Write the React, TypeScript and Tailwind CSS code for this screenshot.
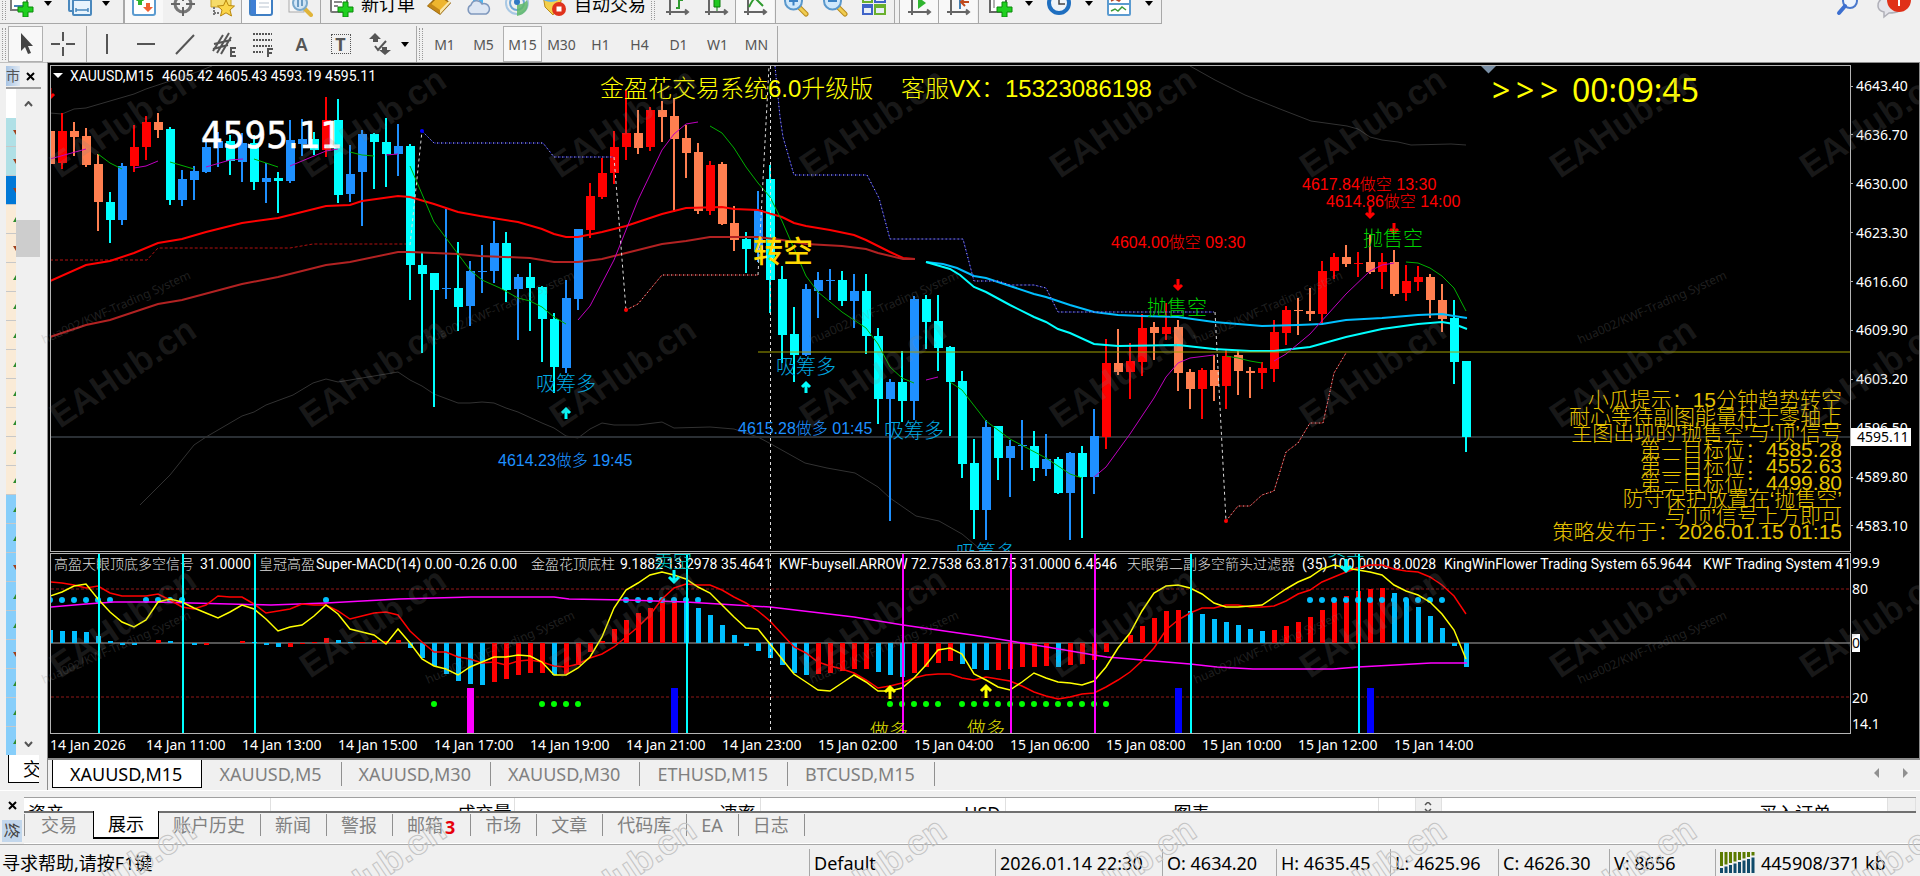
import type { ReactNode } from 'react'
import clsx from 'clsx'

const UI = "font-['Noto_Sans','Noto_Sans_CJK_SC',sans-serif]"
const LABEL = "font-['Roboto','Noto_Sans_CJK_SC',sans-serif] font-normal"
const ARIAL = "font-['Liberation_Sans','Noto_Sans_CJK_SC',sans-serif] font-light"

const CYAN = '#00ffff'
const BLUE = '#1e90ff'
const RED = '#ff0000'
const CORAL = '#ff7f50'
const SKY = '#00bfff'

// every candle sits on a 12px step
const cx = (i: number) => 50 + i * 12

type Candle = [color: string, top: number, bottom: number, high: number, low: number]

const candles: Candle[] = [
  [CORAL, 131, 164, 122, 173], [RED, 131, 163, 113, 169], [CORAL, 131, 137, 122, 156], [CORAL, 136, 165, 128, 167],
  [CORAL, 164, 202, 154, 231], [CYAN, 202, 220, 192, 243], [BLUE, 166, 220, 163, 225], [RED, 147, 166, 125, 172],
  [RED, 122, 147, 116, 160], [CORAL, 122, 130, 113, 138], [CYAN, 129, 200, 127, 205], [BLUE, 179, 200, 170, 206],
  [BLUE, 171, 180, 166, 200], [BLUE, 147, 172, 139, 173], [BLUE, 141, 148, 132, 167], [CYAN, 141, 161, 135, 175],
  [BLUE, 143, 162, 133, 182], [CYAN, 143, 182, 135, 190], [BLUE, 178, 182, 163, 203], [CYAN, 178, 181, 172, 213],
  [BLUE, 140, 181, 120, 183], [BLUE, 139, 144, 119, 156], [CYAN, 139, 150, 132, 155], [RED, 120, 150, 97, 157],
  [CYAN, 120, 195, 99, 203], [BLUE, 174, 194, 145, 202], [BLUE, 134, 172, 130, 226], [CYAN, 134, 142, 133, 189],
  [CYAN, 142, 154, 118, 187], [BLUE, 146, 154, 124, 176], [CYAN, 146, 265, 144, 300], [CYAN, 265, 274, 252, 353],
  [CYAN, 273, 290, 273, 407], [BLUE, 288, 289, 209, 299], [CYAN, 288, 307, 242, 331], [BLUE, 271, 306, 261, 326],
  [BLUE, 271, 272, 245, 293], [BLUE, 243, 271, 221, 283], [CYAN, 243, 290, 232, 302], [BLUE, 277, 289, 274, 340],
  [CYAN, 277, 288, 263, 331], [CYAN, 287, 319, 286, 362], [CYAN, 319, 367, 313, 393], [BLUE, 298, 368, 280, 373],
  [BLUE, 229, 299, 229, 310], [RED, 196, 230, 183, 238], [RED, 173, 197, 158, 199], [RED, 147, 173, 131, 184],
  [RED, 133, 147, 90, 160], [CORAL, 133, 148, 110, 154], [RED, 110, 147, 107, 151], [CORAL, 110, 117, 101, 142],
  [CORAL, 116, 139, 98, 212], [CORAL, 138, 153, 125, 178], [CORAL, 152, 211, 143, 214], [RED, 165, 211, 161, 215],
  [CORAL, 164, 224, 162, 225], [CORAL, 223, 240, 206, 251], [CYAN, 239, 249, 232, 273], [BLUE, 210, 252, 191, 262],
  [CYAN, 179, 280, 165, 313], [CYAN, 279, 335, 266, 363], [CYAN, 334, 355, 307, 382], [BLUE, 289, 355, 284, 356],
  [BLUE, 280, 291, 272, 318], [BLUE, 280, 281, 269, 300], [CYAN, 280, 301, 271, 306], [BLUE, 291, 301, 274, 328],
  [CYAN, 291, 336, 274, 354], [CYAN, 336, 399, 328, 424], [BLUE, 382, 399, 379, 521], [CYAN, 382, 401, 351, 422],
  [BLUE, 299, 401, 296, 420], [CYAN, 299, 322, 295, 349], [CYAN, 321, 348, 295, 371], [CYAN, 347, 382, 346, 436],
  [CYAN, 381, 464, 371, 478], [CYAN, 463, 510, 439, 539], [BLUE, 427, 510, 420, 540], [CYAN, 426, 458, 426, 480],
  [BLUE, 446, 458, 440, 497], [BLUE, 445, 446, 420, 470], [CYAN, 446, 468, 431, 481], [BLUE, 459, 469, 434, 476],
  [CYAN, 459, 493, 457, 494], [BLUE, 453, 493, 452, 540], [CYAN, 453, 477, 446, 538], [BLUE, 436, 477, 409, 494],
  [RED, 363, 437, 339, 449], [CORAL, 363, 372, 329, 375], [RED, 361, 372, 343, 399], [RED, 328, 362, 314, 376],
  [CORAL, 327, 333, 322, 360], [RED, 327, 334, 303, 340], [CORAL, 327, 373, 320, 391], [CORAL, 372, 389, 369, 409],
  [RED, 370, 389, 368, 419], [CORAL, 370, 386, 355, 401], [RED, 356, 386, 350, 409], [CORAL, 355, 371, 351, 395],
  [CORAL, 371, 373, 367, 398], [RED, 368, 373, 362, 389], [RED, 332, 369, 320, 382], [RED, 310, 333, 306, 345],
  [CORAL, 310, 311, 298, 335], [CORAL, 311, 314, 288, 321], [RED, 271, 314, 261, 325], [RED, 257, 271, 253, 279],
  [CORAL, 257, 264, 245, 267], [RED, 263, 264, 252, 277], [CORAL, 262, 272, 235, 274], [RED, 262, 272, 253, 289],
  [CORAL, 262, 294, 250, 296], [RED, 281, 293, 265, 301], [RED, 277, 282, 266, 291], [CORAL, 277, 300, 274, 318],
  [CORAL, 300, 319, 284, 332], [CYAN, 318, 362, 300, 384], [CYAN, 361, 437, 361, 452],
]

const bands = [
  '50,113 62,114 74,109 86,108 134,94 146,89 158,85 182,77 194,73 212,66',
  '140,505 170,475 182,460 194,445 206,437 242,416 254,412 266,405 293,395 313,383 326,379 338,382 398,372 410,380 422,386 434,394 458,403 470,403 482,402 494,403 506,408 518,412 542,423 554,428 566,436 578,438 590,429 602,423 614,425 638,425 662,422 674,428 710,427 734,429 758,437 771,444 805,463 827,468 855,473 878,487 890,498 916,516 939,521 962,534 980,549',
  '1190,66 1215,80 1245,95 1280,109 1311,121 1347,126 1358,129 1370,137 1382,140 1398,142 1411,145 1451,144 1466,145',
]

const averages = [
  { color: RED, pts: '50,281 86,265 110,261 134,253 158,243 182,239 206,232 242,223 278,218 302,212 326,206 350,205 362,201 398,196 410,197 434,204 458,212 480,216 518,222 542,229 554,234 566,237 578,237 602,232 626,226 638,222 662,214 686,208 722,207 734,209 758,210 782,217 794,223 806,226 830,230 854,235 866,240 890,252 903,258 915,259' },
  { color: '#b22222', pts: '50,337 86,325 110,320 158,304 182,300 242,284 278,277 326,265 350,262 398,252 410,252 458,254 480,256 530,258 554,262 578,262 602,259 626,253 662,244 686,241 710,237 758,237 782,240 806,244 842,246 866,249 878,253 903,259 915,259' },
  { color: SKY, pts: '926,262 943,264 957,268 974,276 986,278 998,282 1034,294 1046,297 1070,305 1094,312 1118,315 1142,316 1178,317 1214,322 1238,324 1262,326 1298,325 1322,324 1346,320 1382,318 1418,315 1442,314 1454,316 1467,318' },
  { color: CYAN, pts: '926,262 950,269 960,275 974,287 986,292 1010,305 1034,317 1046,322 1058,329 1070,333 1094,344 1118,346 1178,345 1214,349 1250,351 1274,351 1310,347 1346,337 1382,329 1418,324 1430,323 1442,322 1454,324 1467,329' },
]

const risingLines = [
  '50,159 86,149', '134,168 146,166 158,161', '206,167 230,160 243,159', '290,166 326,151 338,149', '386,155 398,154',
  '578,320 590,306 614,260 638,200 662,150 674,134 686,124 698,122', '926,380 938,377',
  '1094,477 1106,467 1130,434 1154,398 1166,377 1178,363 1190,358 1214,355',
  '1274,361 1286,354 1310,334 1346,294 1370,271 1382,265 1394,263',
]

const fallingLines = [
  '98,154 110,163 122,169', '170,162 194,169', '254,159 278,167', '350,152 362,155 374,156',
  '410,166 434,222 458,254 470,270 482,280 500,288 518,298 530,301 542,307 554,317 566,324',
  '710,126 722,133 734,148 746,167 758,183 770,197 782,221 806,276 818,292 842,312 866,328 878,344 890,367 902,378 914,383',
  '950,382 962,390 986,421 1010,439 1046,458 1070,474 1082,478', '1226,356 1238,358 1250,361 1262,363',
  '1406,262 1418,263 1430,268 1442,276 1454,288 1466,311',
]

const stops = [
  { color: '#2020ff', pts: '422,131 434,143 543,143 554,157 614,157' },
  { color: '#2020ff', pts: '775,66 780,117 783,137 794,175 867,175 879,198 890,239 963,239 974,281 998,281 1010,285 1034,285 1046,288 1058,312 1214,312' },
  { color: '#ff2020', pts: '626,310 638,304 662,275 758,275' },
  { color: '#ff2020', pts: '1226,521 1238,506 1250,506 1262,495 1274,491 1286,452 1298,443 1310,423 1323,423 1334,373 1346,353' },
]

const bars = [
  { color: SKY, from: 0, ys: [630, 631, 631, 632, 636, 641, 645, 645] },
  { color: RED, from: 9, ys: [640] },
  { color: SKY, from: 10, ys: [641] },
  { color: SKY, from: 12, ys: [645] },
  { color: RED, from: 13, ys: [645] },
  { color: RED, from: 16, ys: [641] },
  { color: SKY, from: 17, ys: [642, 645, 647] },
  { color: RED, from: 20, ys: [647, 644, 642, 638] },
  { color: SKY, from: 24, ys: [640, 642] },
  { color: RED, from: 26, ys: [642, 640, 641, 640] },
  { color: SKY, from: 30, ys: [648, 658, 666, 674, 681, 684, 685] },
  { color: RED, from: 37, ys: [682, 679, 675, 673, 673] },
  { color: SKY, from: 42, ys: [675] },
  { color: RED, from: 43, ys: [674, 665, 652, 641, 629, 620, 613, 608, 602, 600] },
  { color: SKY, from: 53, ys: [602, 608, 615, 625, 635, 646, 651, 658, 665, 673, 675] },
  { color: RED, from: 64, ys: [674, 673, 671, 669, 669] },
  { color: SKY, from: 69, ys: [672, 675, 677] },
  { color: RED, from: 72, ys: [673, 667, 663, 661] },
  { color: SKY, from: 76, ys: [664, 669, 670] },
  { color: RED, from: 79, ys: [670, 669, 667, 667, 666] },
  { color: SKY, from: 84, ys: [667] },
  { color: RED, from: 85, ys: [665, 664, 660, 652] },
  { color: RED, from: 90, ys: [635, 626, 618, 611, 610] },
  { color: SKY, from: 95, ys: [611, 614, 619, 622, 625, 629, 631] },
  { color: RED, from: 102, ys: [630, 626, 622, 617, 610, 602, 596, 591, 589, 588] },
  { color: SKY, from: 112, ys: [593, 599, 607, 616, 628, 646, 667] },
]

const yellowLine = [
  596, 592, 586, 584, 599, 612, 622, 627, 620, 602, 599, 602, 608, 613, 618, 612, 605, 609, 619, 631, 627, 625, 616, 605,
  614, 629, 632, 635, 644, 629, 643, 659, 666, 669, 675, 667, 662, 657, 657, 655, 656, 662, 675, 675, 668, 657, 637, 608,
  590, 583, 575, 572, 575, 579, 587, 593, 605, 617, 628, 629, 644, 659, 674, 682, 690, 691, 683, 675, 682, 691, 691, 688,
  678, 665, 650, 648, 654, 674, 680, 687, 690, 682, 673, 678, 682, 683, 685, 681, 667, 648, 633, 611, 593, 586, 585, 588,
  594, 603, 607, 607, 606, 605, 597, 589, 582, 577, 569, 565, 568, 570, 572, 575, 585, 591, 595, 602, 614, 630, 659,
]

const redLine = [
  582, 583, 585, 588, 586, 593, 596, 596, 596, 594, 600, 607, 609, 605, 596, 597, 597, 604, 613, 611, 609, 604, 605, 605,
  611, 619, 616, 613, 612, 615, 631, 642, 652, 652, 657, 659, 663, 662, 665, 661, 660, 662, 666, 667, 664, 658, 654, 647,
  637, 627, 615, 599, 588, 584, 585, 585, 590, 597, 603, 611, 621, 634, 647, 653, 662, 666, 669, 673, 680, 688, 686, 683,
  678, 675, 674, 674, 678, 680, 677, 679, 681, 686, 692, 696, 699, 697, 694, 693, 687, 680, 672, 661, 648, 630, 620, 613,
  608, 608, 605, 605, 607, 607, 606, 601, 594, 590, 582, 577, 572, 568, 565, 565, 569, 571, 572, 577, 585, 596, 614,
]

const magentaLine =
  '50,607 86,604 114,602 154,602 229,604 271,605 326,603 399,599 471,597 554,597 569,599 626,600 686,602 770,607 854,617 903,625 986,637 1047,647 1094,655 1107,657 1142,660 1190,664 1217,667 1253,669 1333,669 1358,667 1395,665 1431,663 1467,663'

const toPoints = (ys: number[]) => ys.map((y, i) => `${cx(i)},${y}`).join(' ')
const range = (a: number, b: number) => Array.from({ length: b - a + 1 }, (_, k) => a + k)

const blueDots = [...range(0, 5), ...range(8, 11), 23, ...range(48, 54), ...range(105, 116)]
const greenDots = [32, ...range(41, 44), ...range(70, 74), ...range(76, 88)]

const notes = [
  '小瓜提示：15分钟趋势转空',
  '耐心等待副图能量柱于零轴上',
  '主图出现的‘抛售空’与‘顶’信号',
  '第一目标位：4585.28',
  '第二目标位：4552.63',
  '第三目标位：4499.80',
  '防守保护放置在‘抛售空’',
  '与‘顶’信号上方即可',
  '策略发布于：2026.01.15 01:15',
]

const indicatorNames: [number, string][] = [
  [54, '高盈天眼顶底多空信号'], [259, '皇冠高盈'], [531, '金盈花顶底柱'], [1127, '天眼第二副多空箭头过滤器'],
]

const indicatorValues: [number, string][] = [
  [200, '31.0000'], [316, 'Super-MACD(14) 0.00 -0.26 0.00'], [620, '9.1882 13.2978 35.4641'],
  [779, 'KWF-buysell.ARROW 72.7538 63.8175 31.0000 6.4646'], [1302, '(35) 100.0000 8.0028'],
  [1444, 'KingWinFlower Trading System 65.9644'], [1703, 'KWF Trading System 41.0000'],
]

const prices = ['4643.40', '4636.70', '4630.00', '4623.30', '4616.60', '4609.90', '4603.20', '4596.50', '4589.80', '4583.10']

const times = [
  '14 Jan 2026', '14 Jan 11:00', '14 Jan 13:00', '14 Jan 15:00', '14 Jan 17:00', '14 Jan 19:00', '14 Jan 21:00', '14 Jan 23:00',
  '15 Jan 02:00', '15 Jan 04:00', '15 Jan 06:00', '15 Jan 08:00', '15 Jan 10:00', '15 Jan 12:00', '15 Jan 14:00',
]

/* ---------- toolbar icons ---------- */

const Svg = ({ children }: { children: ReactNode }) => (
  <svg width="26" height="26" viewBox="0 0 26 26" fill="none" className="shrink-0">{children}</svg>
)

const Plus = () => <path d="M14 11h5v5h5v5h-5v5h-5v-5H9v-5h5z" fill="#1fd01f" stroke="#0b8a0b" strokeWidth="1" />

const Lens = ({ sign }: { sign: ReactNode }) => (
  <Svg>
    <path d="M16 16l7 7" stroke="#b98a1c" strokeWidth="5" strokeLinecap="round" />
    <path d="M16 16l7 7" stroke="#f0cc50" strokeWidth="3" strokeLinecap="round" />
    <circle cx="10.500" cy="10" r="8.500" fill="#cfe8fb" stroke="#5a98cc" strokeWidth="2" />
    {sign}
  </Svg>
)

const Axes = ({ children }: { children?: ReactNode }) => (
  <Svg>
    <path d="M6 2v22M2 21h22M21 18.500l3 2.500-3 2.500" stroke="#666" strokeWidth="2" />
    {children}
  </Svg>
)

const icons = {
  newChart: (
    <Svg>
      <rect x="2" y="2" width="16" height="17" fill="#fff" stroke="#7a7a7a" strokeWidth="2" />
      <path d="M5 15h10" stroke="#4682b4" strokeWidth="2" />
      <Plus />
    </Svg>
  ),
  profiles: (
    <Svg>
      <rect x="2" y="3" width="17" height="17" rx="1" fill="#dceefb" stroke="#4a88bd" strokeWidth="2" />
      <rect x="6" y="9" width="18" height="15" rx="1" fill="#e8f4fd" stroke="#4a88bd" strokeWidth="2" />
      <path d="M9 19h12M9 17v4M21 17v4" stroke="#4a88bd" strokeWidth="1.500" />
    </Svg>
  ),
  market: (
    <Svg>
      <rect x="2" y="1" width="22" height="23" rx="2" fill="#fff" stroke="#5b9bd0" strokeWidth="2" />
      <path d="M9 5l4 5h-2v4H7v-4H5z" fill="#2fb52f" />
      <path d="M17 21l-5-5h3v-4h4v4h3z" fill="#f06030" />
    </Svg>
  ),
  target: (
    <Svg>
      <circle cx="13" cy="13" r="8" stroke="#777" strokeWidth="3" />
      <path d="M13 1v9M13 16v9M1 13h9M16 13h9" stroke="#666" strokeWidth="2" />
    </Svg>
  ),
  folder: (
    <Svg>
      <path d="M2 5h8l2 3h10v8H2z" fill="#f6dc6a" stroke="#c9a227" />
      <path d="M5 16v9M5 22h6" stroke="#777" strokeWidth="2" strokeDasharray="2 1" />
      <path d="M17 9l2.500 5.500 6 .5-4.500 4 1.500 6-5.500-3.200L11.500 25l1.500-6-4.500-4 6-.5z" fill="#fbd54a" stroke="#b8860b" />
    </Svg>
  ),
  list: (
    <Svg>
      <rect x="2" y="2" width="22" height="22" rx="2" fill="#fff" stroke="#3f7fc4" strokeWidth="2" />
      <path d="M3 3h5v20H3z" fill="#3f7fd4" />
      <path d="M11 8h10M11 12h10M11 16h10" stroke="#b9c4d0" />
    </Svg>
  ),
  tester: (
    <Svg>
      <rect x="2" y="1" width="15" height="20" fill="#f6f6f6" stroke="#aaa" />
      <path d="M17 17l7 7" stroke="#e0b43a" strokeWidth="4" strokeLinecap="round" />
      <circle cx="13" cy="12" r="7" fill="#cfe6f8" fillOpacity=".9" stroke="#7aa9cc" strokeWidth="2" />
      <path d="M11 8v8M15 9v6" stroke="#6b9cc4" strokeWidth="2" />
    </Svg>
  ),
  order: (
    <Svg>
      <rect x="2" y="1" width="16" height="20" rx="1" fill="#fff" stroke="#777" strokeWidth="2" />
      <path d="M5 7h9M5 11h8M5 15h4" stroke="#888" strokeWidth="2" />
      <Plus />
    </Svg>
  ),
  book: (
    <Svg>
      <path d="M2 15L13 4l11 8-10 11z" fill="#eeb52e" stroke="#9a6a10" strokeWidth="1.500" />
      <path d="M2 15l12 8v-4L4 12z" fill="#c48718" />
      <path d="M14 23l10-11v-3L14 19z" fill="#fbe7a8" />
    </Svg>
  ),
  cloud: (
    <Svg>
      <path d="M8 2h10v11H8z" fill="#4fb6f0" />
      <path d="M13 3v9" stroke="#fff" strokeWidth="2" />
      <path d="M6 23a5 5 0 010-9 6 6 0 0111-1 5 5 0 014 10z" fill="#dde6f3" stroke="#7f98bd" strokeWidth="1.500" />
    </Svg>
  ),
  signal: (
    <Svg>
      <circle cx="13" cy="12" r="11" stroke="#a8c8e4" strokeWidth="2" />
      <circle cx="13" cy="12" r="7" stroke="#6fa8d8" strokeWidth="2" />
      <path d="M13 25V13a10 10 0 0010-4c3 8-2 15-10 16z" fill="#5fb96a" fillOpacity=".85" />
      <circle cx="13" cy="11" r="3" fill="#2f79c4" />
    </Svg>
  ),
  robot: (
    <Svg>
      <path d="M3 4h20l-3 9-7 11-8-8z" fill="#f4cf4a" stroke="#b98a1c" />
      <ellipse cx="11" cy="6" rx="9" ry="5" fill="#6bb4e8" />
      <circle cx="19" cy="18" r="7" fill="#e0321c" />
      <path d="M16.500 15.500h5v5h-5z" fill="#fff" />
    </Svg>
  ),
  barChart: <Axes><path d="M15 2v16M15 9h4M12 17h3" stroke="#2f9a2f" strokeWidth="2" /></Axes>,
  candleChart: <Axes><path d="M14 2v18" stroke="#0a7a0a" /><path d="M11 2h6v14h-6z" fill="#1fc81f" stroke="#0a7a0a" /></Axes>,
  lineChart: <Axes><path d="M7 16c2-4 5-10 7-8s4 4 7 7" stroke="#2f9a2f" strokeWidth="2" /></Axes>,
  zoomIn: <Lens sign={<path d="M6 10h9M10.500 5.500v9" stroke="#3b82c4" strokeWidth="2" />} />,
  zoomOut: <Lens sign={<path d="M6 10h9" stroke="#3b82c4" strokeWidth="2" />} />,
  tile: (
    <Svg>
      <path d="M1 1h11v11H1zM13 13h12v11H13z" fill="#6ab02e" />
      <path d="M13 1h12v11H13zM1 13h11v11H1z" fill="#3f63c8" />
      <path d="M3 5h7v5H3zM15 5h8v5h-8zM3 17h7v5H3zM15 17h8v5h-8z" fill="#e8eef8" />
    </Svg>
  ),
  autoScroll: <Axes><path d="M12 6l8 6-8 6z" fill="#2fb52f" /></Axes>,
  shift: <Axes><path d="M15 4v14" stroke="#4682b4" strokeWidth="2" /><path d="M24 11h-7M20 7l-4 4 4 4" stroke="#c04a1c" strokeWidth="2" /></Axes>,
  indicators: (
    <Svg>
      <rect x="2" y="1" width="16" height="20" fill="#fff" stroke="#666" strokeWidth="2" />
      <path d="M6 5v12" stroke="#666" />
      <Plus />
    </Svg>
  ),
  clock: (
    <Svg>
      <circle cx="13" cy="12" r="10" fill="#eef3f8" stroke="#1f6fc0" strokeWidth="4" />
      <path d="M13 5v8h6" stroke="#444" strokeWidth="1.500" />
    </Svg>
  ),
  template: (
    <Svg>
      <rect x="2" y="2" width="22" height="22" rx="1" fill="#fff" stroke="#5b9bd0" strokeWidth="2" />
      <path d="M3 13h20" stroke="#5b9bd0" strokeWidth="2" />
      <path d="M5 10l4-2 4 2 4-4 4 1" stroke="#b5482a" strokeWidth="1.500" />
      <path d="M5 20l4-2 3 2 4-4 4 3" stroke="#3a9a3a" strokeWidth="1.500" />
    </Svg>
  ),
}

const Tool = ({ icon, width = 'w-[39px]', pressed, label }: { icon: ReactNode; width?: string; pressed?: boolean; label: string }) => (
  <button
    aria-label={label}
    className={clsx('flex h-full shrink-0 items-center justify-center', width, pressed && 'border-l border-[#a8a8a8] bg-[#f8f8f8]')}
  >
    {icon}
  </button>
)

const Caret = ({ width, label }: { width: string; label: string }) => (
  <button aria-label={label} className={clsx('flex h-full shrink-0 items-center justify-center', width)}>
    <svg width="8" height="5" viewBox="0 0 8 5"><path d="M0 0h8L4 5z" fill="#000" /></svg>
  </button>
)

const Grip = () => <span className="mx-0.5 h-8 w-1 shrink-0 border-x border-dotted border-[#999]" />
const Sep = () => <span className="h-full w-0.5 shrink-0 border-r border-[#a8a8a8]" />

const TopToolbar = () => (
  <div className="flex h-6 items-end justify-between overflow-hidden">
    <div className="flex h-10 shrink-0 items-center border-r border-b border-[#a8a8a8] pr-1.5">
      <Grip />
      <Tool icon={icons.newChart} width="w-7" label="New chart" />
      <Caret width="w-6" label="Chart list" />
      <Tool icon={icons.profiles} width="w-10" label="Profiles" />
      <Caret width="w-3" label="Profile list" />
      <span className="w-2.5" />
      <Sep />
      <Tool icon={icons.market} pressed label="Market watch" />
      <Tool icon={icons.target} label="Data window" />
      <Tool icon={icons.folder} label="Navigator" />
      <Tool icon={icons.list} pressed label="Terminal" />
      <Tool icon={icons.tester} label="Tester" />
      <Sep />
      <button className="flex h-full w-[98px] shrink-0 items-center gap-1.5 pl-2 text-lg whitespace-nowrap text-black">
        {icons.order}
        新订单
      </button>
      <Tool icon={icons.book} label="Editor" />
      <Tool icon={icons.cloud} label="Cloud" />
      <Tool icon={icons.signal} label="Signals" />
      <button className="flex h-full w-[113px] shrink-0 items-center gap-2 pl-1 text-lg whitespace-nowrap text-black">
        {icons.robot}
        自动交易
      </button>
      <Grip />
      <Tool icon={icons.barChart} label="Bars" />
      <Tool icon={icons.candleChart} label="Candles" />
      <Tool icon={icons.lineChart} pressed label="Line" />
      <Sep />
      <Tool icon={icons.zoomIn} label="Zoom in" />
      <Tool icon={icons.zoomOut} label="Zoom out" />
      <Tool icon={icons.tile} label="Tile windows" />
      <Sep />
      <span className="w-1" />
      <Tool icon={icons.autoScroll} pressed label="Auto scroll" />
      <Tool icon={icons.shift} pressed label="Chart shift" />
      <Sep />
      <Tool icon={icons.indicators} width="w-11" label="Indicators" />
      <Caret width="w-3" label="Indicator list" />
      <Tool icon={icons.clock} width="w-12" label="Periods" />
      <Caret width="w-3" label="Period list" />
      <Tool icon={icons.template} width="w-12" label="Templates" />
      <Caret width="w-3" label="Template list" />
    </div>
    <div className="flex h-10 items-center gap-4 pr-2">
      <button aria-label="Search">
        <svg width="24" height="26" viewBox="0 0 24 26" fill="none">
          <circle cx="14" cy="10" r="7" fill="#eef4fc" stroke="#4a78cc" strokeWidth="2" />
          <path d="M9 15l-6 7" stroke="#3c6fd0" strokeWidth="4" strokeLinecap="round" />
        </svg>
      </button>
      <button aria-label="Messages">
        <svg width="36" height="34" viewBox="0 0 36 34" fill="none">
          <path d="M2 19c0-7 6-9 12-9s12 3 12 9-6 7-13 7l-5 4v-5c-4-1-6-3-6-6z" fill="#e4e4ea" stroke="#b0b0b8" strokeWidth="1.500" />
          <circle cx="23" cy="13" r="12" fill="#e03018" />
          <path d="M23 6v13" stroke="#fff" strokeWidth="2" />
        </svg>
      </button>
    </div>
  </div>
)

const drawIcons: { label: string; art: ReactNode }[] = [
  { label: 'Vertical line', art: <path d="M13 3v20" /> },
  { label: 'Horizontal line', art: <path d="M4 13h18" /> },
  { label: 'Trend line', art: <path d="M4 23L22 4" /> },
  {
    label: 'Channel',
    art: <><path d="M2 20L12 4M6 22L18 2M10 23L20 6M3 13l17-4M2 18l15-4" /><path d="M25 17h-5v8h5M20 21h4" /></>,
  },
  {
    label: 'Fibonacci',
    art: <><path d="M3 3h19M3 9h19M3 15h19M3 21h10" strokeDasharray="2 1" /><path d="M18 26v-8h5M18 22h4" /></>,
  },
]

const timeframes = ['M1', 'M5', 'M15', 'M30', 'H1', 'H4', 'D1', 'W1', 'MN']

const DrawToolbar = () => (
  <div className="flex h-[38px] items-center pt-0.5 text-[#555]">
    <Grip />
    <button aria-label="Cursor" className="flex h-full w-[35px] items-center justify-center border border-[#b0b0b0] bg-[#f8f8f8]">
      <svg width="14" height="24" viewBox="0 0 14 24"><path d="M2 1v18l4-4 3 7 3-1-3-7h5z" fill="#444" /></svg>
    </button>
    <Tool label="Crosshair" icon={<Svg><path d="M13 1v9M13 16v9M1 13h9M16 13h9" stroke="#555" strokeWidth="2" /></Svg>} />
    <span className="w-[3px]" />
    <Sep />
    {drawIcons.map((d) => (
      <Tool key={d.label} label={d.label} icon={<Svg><g stroke="#555" strokeWidth="2">{d.art}</g></Svg>} />
    ))}
    <button className="w-[39px] text-lg font-semibold">A</button>
    <button className="flex w-[39px] justify-center">
      <span className="h-5 w-5 border border-dotted border-[#555] text-center text-lg leading-[18px] font-bold">T</span>
    </button>
    <Tool
      label="Arrows"
      icon={<Svg><path d="M8 2l6 6h-3v3H6V8H2zM18 24l-6-5h3v-3h5v3h4z" fill="#555" /><path d="M8 15l3 4 8-9" stroke="#555" strokeWidth="2" /></Svg>}
    />
    <Caret width="w-3" label="Arrow list" />
    <span className="w-1" />
    <Sep />
    <Grip />
    {timeframes.map((t) => (
      <button
        key={t}
        className={clsx('h-full w-[39px] text-[14px]', t === 'M15' && 'border border-[#b0b0b0] bg-[#f8f8f8]')}
      >
        {t}
      </button>
    ))}
    <Sep />
  </div>
)

/* ---------- market watch strip ---------- */

const rowColors = [
  ...Array(2).fill('bg-[#b0e0e6]'), 'bg-[#0078d7]', ...Array(10).fill('bg-[#faebd7]'), ...Array(9).fill('bg-[#87cefa]'),
] as string[]
const downRows = [0, 1, 2, 4, 15, 18]

const SidePanel = () => (
  <aside className="flex w-[47px] shrink-0 flex-col border-t border-[#c0c0c0] pl-1.5">
    <div className="flex h-6 items-center gap-1.5 pt-0.5">
      <span className="h-5 w-3.5 overflow-hidden bg-gradient-to-r from-[#a8c4e4] to-[#dfe8f2] text-sm leading-5 text-[#555]">市</span>
      <button aria-label="Close panel">
        <svg width="9" height="9" viewBox="0 0 9 9"><path d="M1 1l7 7M8 1L1 8" stroke="#000" strokeWidth="2" /></svg>
      </button>
    </div>
    <div className="flex h-[668px] w-[35px] border-t-2 border-[#a0a0a0]">
      <div className="w-2.5 overflow-hidden">
        <div className="h-[29px] bg-white" />
        {rowColors.map((c, i) => (
          <div key={i} className={clsx('flex h-[29px] items-center justify-end border-b border-[#c8c8c8]', c)}>
            <svg width="3" height="5" viewBox="0 0 3 5">
              <path d={downRows.includes(i) ? 'M0 0h3v5z' : 'M3 0v5H0z'} fill={downRows.includes(i) ? '#a0401c' : '#2e8b2e'} />
            </svg>
          </div>
        ))}
      </div>
      <div className="flex w-6 flex-col items-center justify-between pt-3 pb-2">
        <svg width="9" height="6" viewBox="0 0 9 6" fill="none"><path d="M1 5l3.500-4L8 5" stroke="#555" strokeWidth="2" /></svg>
        <span className="mb-[372px] h-[37px] w-6 bg-[#cdcdcd]" />
        <svg width="9" height="6" viewBox="0 0 9 6" fill="none"><path d="M1 1l3.500 4L8 1" stroke="#555" strokeWidth="2" /></svg>
      </div>
    </div>
    <button className="ml-0.5 h-7 w-[31px] overflow-hidden border-b border-l border-black bg-white pl-3.5 text-left text-lg leading-6 whitespace-nowrap">交易品种</button>
  </aside>
)

/* ---------- chart ---------- */

const Arrow = ({ x, y, color, down, size = 4 }: { x: number; y: number; color: string; down?: boolean; size?: number }) => {
  const s = down ? -1 : 1
  return (
    <path
      d={`M${x} ${y + s * (size + 2)}V${y - s * 3}M${x - size} ${y}L${x} ${y - s * size}L${x + size} ${y}`}
      stroke={color}
      strokeWidth="3"
      fill="none"
    />
  )
}

const Dotted = ({ pts, color }: { pts: string; color: string }) => (
  <>
    <polyline points={pts} stroke={color} strokeOpacity=".7" strokeDasharray="3 1" />
    <polyline points={pts} stroke="#ccc" strokeDasharray="1 3" />
  </>
)

const MainPane = () => (
  <div className="relative h-[487px] overflow-hidden border border-[#b4b4b4]">
    <svg className="absolute inset-0 h-full w-full" fill="none">
      <line x1="0" x2="100%" y1="371" y2="371" stroke="#555f69" />
      <g transform="translate(-51 -66)">
        {bands.map((b) => <polyline key={b} points={b} stroke="#323232" />)}
        <polyline points="50,260 147,260 158,248 290,248 313,244 410,244" stroke="#b01010" strokeDasharray="3 2" />
        {candles.map(([color, top, bottom, high, low], i) => (
          <g key={i} fill={color}>
            <rect x={cx(i) - 1} y={high} width="2" height={low - high} />
            <rect x={cx(i) - 4} y={top} width="9" height={bottom - top} />
          </g>
        ))}
        {averages.map((a) => <polyline key={a.color} points={a.pts} stroke={a.color} strokeWidth="2" />)}
        {risingLines.map((l) => <polyline key={l} points={l} stroke="#c000c0" />)}
        {fallingLines.map((l) => <polyline key={l} points={l} stroke="#00b000" />)}
        {stops.map((s) => <Dotted key={s.pts} {...s} />)}
        <g stroke="#ddd" strokeDasharray="3 3">
          <path d="M410 245L422 131M614 157L626 310M758 275L769 66M1215 312L1226 521" />
          <path d="M770.500 66V552" />
        </g>
        <circle cx="422" cy="131" r="2" fill="#00f" />
        <circle cx="626" cy="310" r="2" fill={RED} />
        <circle cx="1226" cy="521" r="2" fill={RED} />
        <Arrow x={566} y={413} color={CYAN} />
        <Arrow x={806} y={387} color={CYAN} />
        <Arrow x={1178} y={285} color={RED} down />
        <Arrow x={1370} y={213} color={RED} down />
        <Arrow x={1394} y={229} color={RED} down />
        <Arrow x={50} y={94} color={RED} down />
        <path d="M1481 66h15l-7.500 7.500z" fill="#7a8fa5" />
        <path d="M53 73h10l-5 5z" fill="#fff" />
      </g>
      <line x1="707" x2="100%" y1="286" y2="286" stroke="#a0a000" />
      <g transform="translate(-51 -66)" className={ARIAL}>
        <g fill="#fff" className={`text-[14px] ${LABEL}`}>
          <text x="70" y="81">XAUUSD,M15</text>
          <text x="162" y="81">4605.42 4605.43 4593.19 4595.11</text>
        </g>
        <text x="201" y="148" fill="#fff" stroke="#fff" strokeWidth=".6" className="font-['DejaVu_Sans_Condensed','DejaVu_Sans',sans-serif] text-[38px] font-normal">4595.11</text>
        <g fill="#ffff00" className="text-[24px]">
          <text x="600" y="97">金盈花交易系统6.0升级版</text>
          <text x="901" y="97">客服VX：15323086198</text>
        </g>
        <g fill="#ffff00" className="font-['Noto_Sans',sans-serif] text-[32px] font-normal">
          <text x="1492" y="102">&gt;</text>
          <text x="1516" y="102">&gt;</text>
          <text x="1540" y="102">&gt;</text>
          <text x="1572" y="102">00:09:45</text>
        </g>
        <text x="753" y="262" fill="#ffd700" className="text-[30px] font-medium">转空</text>
        <g fill="#00a8e0" className="text-[20px]">
          <text x="536" y="391">吸筹多</text>
          <text x="776" y="374">吸筹多</text>
          <text x="884" y="438">吸筹多</text>
          <text x="956" y="560">吸筹多</text>
        </g>
        <g fill="#00d000" className="text-[20px]">
          <text x="1147" y="315">抛售空</text>
          <text x="1363" y="246">抛售空</text>
        </g>
        <g fill={BLUE} className="text-[16px]">
          <text x="498" y="466">4614.23做多 19:45</text>
          <text x="738" y="434">4615.28做多 01:45</text>
        </g>
        <g fill={RED} className="text-[16px]">
          <text x="1302" y="190">4617.84做空 13:30</text>
          <text x="1326" y="207">4614.86做空 14:00</text>
          <text x="1111" y="248">4604.00做空 09:30</text>
        </g>
      </g>
    </svg>
    <svg className={`absolute inset-0 h-full w-full text-[21px] ${ARIAL}`} fill="#e6c200" textAnchor="end">
      <g transform="translate(-8 0)">
        {notes.map((n, i) => <text key={n} x="100%" y={341 + Math.round(i * 16.5)}>{n}</text>)}
      </g>
    </svg>
  </div>
)

const SubPane = () => (
  <div className="relative mt-px h-[181px] overflow-hidden border border-[#b4b4b4]">
    <svg className="absolute inset-0 h-full w-full" fill="none">
      <line x1="0" x2="100%" y1="35" y2="35" stroke="#901818" strokeDasharray="3 2" />
      <line x1="0" x2="100%" y1="143" y2="143" stroke="#901818" strokeDasharray="3 2" />
      <line x1="0" x2="100%" y1="89" y2="89" stroke="#aaa" />
      <g transform="translate(-51 -554)">
        {bars.map(({ color, from, ys }) =>
          ys.map((y, k) => (
            <rect key={from + k} x={cx(from + k) - 2} y={Math.min(y, 643)} width="5" height={Math.abs(643 - y)} fill={color} />
          )),
        )}
        <g className={`text-[14px] ${ARIAL}`} fill="#ddd">
          {indicatorNames.map(([x, t]) => <text key={x} x={x} y="569">{t}</text>)}
        </g>
        <g className={`text-[14px] ${LABEL}`} fill="#fff">
          {indicatorValues.map(([x, t]) => <text key={x} x={x} y="569">{t}</text>)}
        </g>
        {blueDots.map((i) => <circle key={i} cx={cx(i)} cy="600" r="3" fill={SKY} />)}
        {greenDots.map((i) => <circle key={i} cx={cx(i)} cy="704" r="3" fill="#00ff00" />)}
        <rect x="467" y="688" width="7" height="46" fill="#ff00ff" />
        {[52, 94, 110].map((i) => <rect key={i} x={cx(i) - 3} y="688" width="7" height="46" fill="#0000ff" />)}
        <polyline points={magentaLine} stroke="#ff00ff" strokeWidth="1.500" />
        <polyline points={toPoints(redLine)} stroke={RED} strokeWidth="1.500" />
        <polyline points={toPoints(yellowLine)} stroke="#ffff00" strokeWidth="1.500" />
        <path d="M99 553V733M183 553V733M255 553V733M687 553V733M1191 553V733M1359 553V733" stroke={CYAN} strokeWidth="2" />
        <path d="M903 553V733M1011 553V733M1095 553V733" stroke="#ff00ff" strokeWidth="2" />
        <path d="M770.500 553V733" stroke="#ddd" strokeDasharray="3 3" />
        <Arrow x={674} y={577} size={5} color={CYAN} down />
        <Arrow x={1346} y={566} size={5} color={CYAN} down />
        <Arrow x={890} y={692} size={5} color="#ffff00" />
        <Arrow x={986} y={691} size={5} color="#ffff00" />
        <g className={`text-[19px] ${ARIAL}`}>
          <text x="654" y="568" fill="#00c8c8">卖空</text>
          <text x="1327" y="556" fill="#00c8c8">卖空</text>
          <text x="870" y="738" fill="#e0e000">做多</text>
          <text x="967" y="736" fill="#e0e000">做多</text>
        </g>
      </g>
    </svg>
  </div>
)

const Chart = () => (
  <main className="flex min-w-0 flex-1 self-start border border-[#8c8c8c] bg-black pt-0.5 pl-0.5 text-[14px] text-white">
    <div className="min-w-0 flex-1">
      <MainPane />
      <SubPane />
      <div className="flex h-6 overflow-hidden">
        {times.map((t) => (
          <span key={t} className="w-24 shrink-0 leading-[22px] whitespace-nowrap">{t}</span>
        ))}
      </div>
    </div>
    <div className="w-[68px] shrink-0">
      <div className="relative flex h-[488px] flex-col justify-between pt-[11px] pb-[17px]">
        {prices.map((p) => (
          <span key={p} className="flex items-center gap-[3px] leading-5">
            <i className="h-px w-0.5 bg-[#b4b4b4]" />
            {p}
          </span>
        ))}
        <span className="absolute top-[363px] left-0 w-[60px] bg-white pl-1.5 leading-[18px] text-black">4595.11</span>
      </div>
      <div className="flex h-[180px] flex-col items-start pl-px leading-5">
        <span>99.9</span>
        <span className="mt-1.5">80</span>
        <span className="mt-[35px] bg-white leading-[18px] text-black">0</span>
        <span className="mt-9">20</span>
        <span className="mt-1.5">14.1</span>
      </div>
    </div>
  </main>
)

const chartTabs = ['XAUUSD,M15', 'XAUUSD,M5', 'XAUUSD,M30', 'XAUUSD,M30', 'ETHUSD,M15', 'BTCUSD,M15']

const ChartTabs = () => (
  <nav className="ml-[47px] flex h-[31px] items-start justify-between border-t border-l border-[#8c8c8c] pl-1 text-lg text-[#808080]">
    <div className="flex">
      {chartTabs.map((t, i) => (
        <button
          key={i}
          className={clsx('pr-[19px] pl-[17px] leading-6', i === 0 ? 'h-7 border border-t-0 border-black bg-white text-black' : 'mt-0.5 h-6 border-r border-[#909090]')}
        >
          {t}
        </button>
      ))}
    </div>
    <div className="flex gap-6 pt-2 pr-3">
      <button aria-label="Previous tab"><svg width="5" height="10" viewBox="0 0 5 10"><path d="M5 0v10L0 5z" fill="#909090" /></svg></button>
      <button aria-label="Next tab"><svg width="5" height="10" viewBox="0 0 5 10"><path d="M0 0v10l5-5z" fill="#909090" /></svg></button>
    </div>
  </nav>
)

const terminalTabs = ['交易', '展示', '账户历史', '新闻', '警报', '邮箱', '市场', '文章', '代码库', 'EA', '日志']

const Terminal = () => (
  <section className="flex border-t border-white pt-1.5">
    <div className="flex w-6 shrink-0 flex-col items-center gap-2.5 pt-1">
      <button aria-label="Close terminal">
        <svg width="9" height="9" viewBox="0 0 9 9"><path d="M1 1l7 7M8 1L1 8" stroke="#000" strokeWidth="2" /></svg>
      </button>
      <span className="h-[22px] w-5 overflow-hidden bg-[#c3d7ec] text-center text-base leading-5 text-[#444] [writing-mode:sideways-rl]">终</span>
    </div>
    <div className="min-w-0 flex-1 pr-1">
      <div className="h-3.5 overflow-hidden border-t border-[#a0a0a0]">
        <table className="w-full table-fixed text-lg leading-[18px] text-black">
          <thead>
            <tr className="bg-white *:border-r *:border-[#e0e0e0] *:pt-1.5 *:font-normal">
              <th className="w-[246px] pl-1 text-left">资产</th>
              <th className="w-[244px] pr-0.5 text-right">成交量</th>
              <th className="w-[246px] pr-1 text-right">速率</th>
              <th className="w-[245px] pr-1 text-right">USD</th>
              <th className="w-[373px] pl-[168px] text-left">图表</th>
              <th className="w-[37px]" />
              <th className="w-[26px] bg-[#f0f0f0] align-top">
                <svg className="mx-auto -mt-0.5" width="8" height="12" viewBox="0 0 8 12" fill="none"><path d="M1 3l3-3 3 3M1 7l3 3 3-3" stroke="#555" strokeWidth="1.500" /></svg>
              </th>
              <th className="pr-14 text-right">买入订单</th>
              <th className="w-7 bg-[#f0f0f0]" />
            </tr>
          </thead>
        </table>
      </div>
      <nav className="flex h-[33px] border-t-2 border-b border-t-[#707070] border-b-white text-lg text-[#808080]">
        {terminalTabs.map((t, i) => (
          <button
            key={t}
            className={clsx(
              'flex items-center leading-6 whitespace-nowrap',
              i === 1 ? '-mt-0.5 h-7 border-x border-b-2 border-black bg-white px-3.5 text-black' : 'mt-px h-[22px] border-r border-[#909090] pr-[15px] pl-3.5',
              i === 0 && 'border-l border-r-transparent pl-4',
            )}
          >
            {t}
            {t === '邮箱' && <b className="pt-1 pl-0.5 text-red-600">3</b>}
          </button>
        ))}
      </nav>
    </div>
  </section>
)

const quotes = [
  ['w-[186px]', 'Default'], ['w-[167px]', '2026.01.14 22:30'], ['w-[114px]', 'O: 4634.20'], ['w-[114px]', 'H: 4635.45'],
  ['w-[108px]', 'L: 4625.96'], ['w-[111px]', 'C: 4626.30'], ['w-[106px]', 'V: 8656'],
]

const StatusBar = () => (
  <footer className="flex h-8 border-t border-[#a8a8a8] text-lg text-black">
    <span className="flex-1 pl-0.5 leading-9">寻求帮助,请按F1键</span>
    {quotes.map(([w, q]) => (
      <span key={q} className={clsx('mt-1 shrink-0 border-l border-[#a8a8a8] pl-1 leading-7 whitespace-nowrap', w)}>{q}</span>
    ))}
    <span className="mt-1 flex w-[205px] shrink-0 items-center gap-1.5 border-l border-[#a8a8a8] pl-1 whitespace-nowrap">
      <svg width="35" height="21" viewBox="0 0 35 21">
        {range(0, 7).map((i) => (
          <g key={i}>
            <rect x={i * 4.5} y="0" width="3" height={14 - i * 1.5} fill="#5a7a00" />
            <rect x={i * 4.5} y={16 - i * 1.5} width="3" height={5 + i * 1.5} fill="#0f4a6a" />
          </g>
        ))}
      </svg>
      445908/371 kb
    </span>
  </footer>
)

const Watermark = () => (
  <svg className="pointer-events-none absolute inset-0 h-full w-full" aria-hidden>
    {range(0, 7).map((k) =>
      [179, 429, 679, 929].map((y) => (
        <text
          key={`${k}-${y}`}
          transform={`translate(${60 + k * 250} ${y}) rotate(-34)`}
          fill={y > 800 ? 'none' : '#808080'}
          fillOpacity=".19"
          stroke={y > 800 ? '#c4c4c4' : 'none'}
          className="font-['Liberation_Sans',sans-serif] text-[35px] font-bold"
        >
          EAHub.cn
        </text>
      )),
    )}
    {range(0, 4).map((k) =>
      [344, 684].map((y) => (
        <text key={`${k}-${y}`} transform={`translate(${44 + k * 384} ${y}) rotate(-24)`} fill="#808080" fillOpacity=".25" className={`text-[12px] ${UI}`}>
          hua002/KWF-Trading System
        </text>
      )),
    )}
  </svg>
)

const App = () => {
  return (
    <div className={`relative overflow-hidden bg-[#f0f0f0] ${UI}`}>
      <TopToolbar />
      <DrawToolbar />
      <div className="-mb-6 flex">
        <SidePanel />
        <Chart />
      </div>
      <ChartTabs />
      <Terminal />
      <StatusBar />
      <Watermark />
    </div>
  )
}

export default App
